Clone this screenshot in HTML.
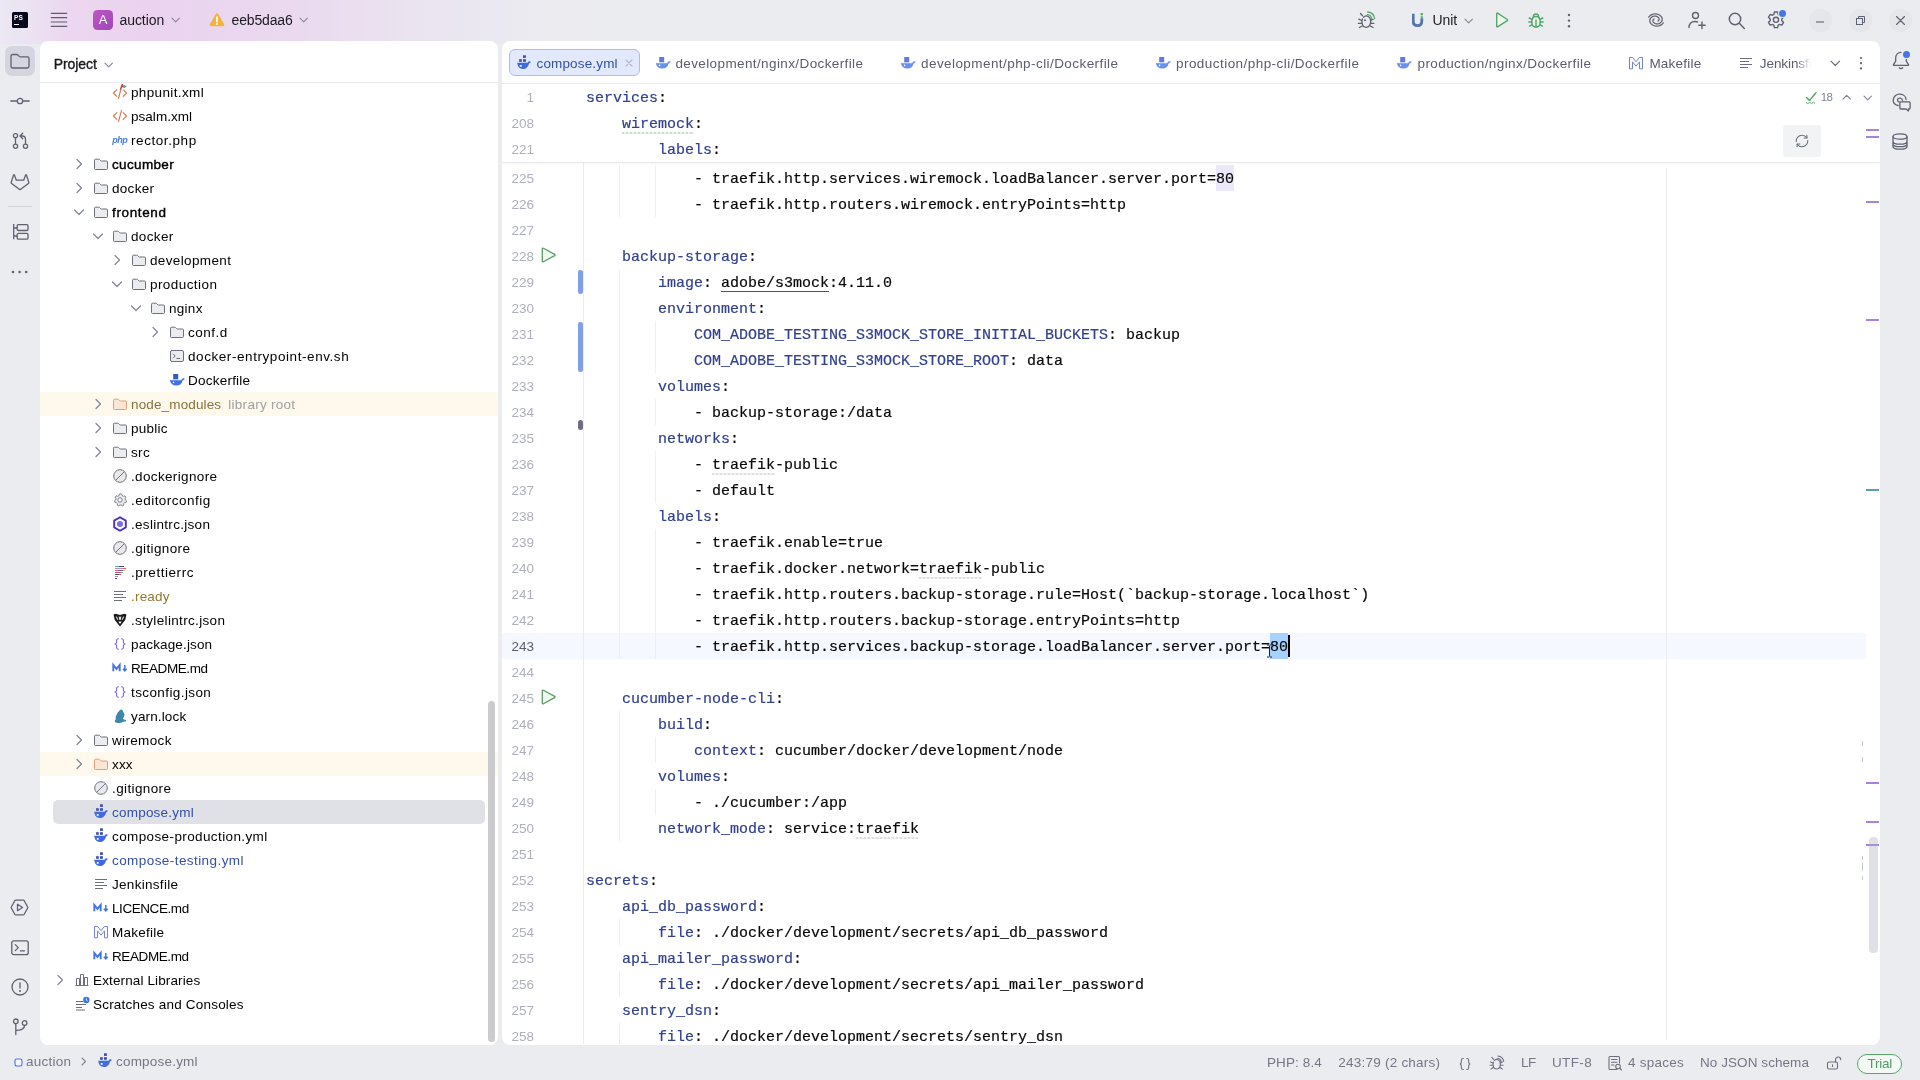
<!DOCTYPE html><html><head><meta charset="utf-8"><title>auction – compose.yml</title><style>
html,body{margin:0;padding:0}
body{width:1920px;height:1080px;overflow:hidden;background:#ebecf0;font-family:"Liberation Sans",sans-serif;font-size:13.5px;color:#000;position:relative}
.a{position:absolute}
.top{left:0;top:0;width:1920px;height:44px;background:linear-gradient(90deg,#ebe7f3 0px,#ebe3f2 30px,#ecd6f0 70px,#ebd3ef 150px,#eadaef 300px,#eae4f0 420px,#ebebf0 540px,#ebecf0 600px)}
.panel{background:#fff;border-radius:8px}
.t{position:absolute;white-space:nowrap}
.code{position:absolute;left:586px;white-space:pre;font-family:"Liberation Mono",monospace;font-size:15px;line-height:26px;height:26px;color:#080808;-webkit-text-stroke:0.2px}
.k{color:#31408f}
.ln{position:absolute;left:494px;width:40px;text-align:right;font-family:"Liberation Sans",sans-serif;font-size:13.500px;line-height:26px;height:26px;color:#aeb1bc}
.g{position:absolute;width:1px;background:#f0f0f3}
</style></head><body><div id="root" style="position:absolute;left:0;top:0;width:1920px;height:1080px;will-change:transform">
<div class="a top"></div>
<div class="a" style="left:12px;top:12px;width:16px;height:16px;background:#07071c;border-radius:1.5px"></div>
<div class="a" style="left:14px;top:13.5px;font:bold 6.5px/7px 'Liberation Sans',sans-serif;color:#fff;letter-spacing:0.1px">PS</div>
<div class="a" style="left:14px;top:23.5px;width:5px;height:1.3px;background:#fff"></div>
<div class="a" style="left:50px;top:12px"><svg width="18" height="16" viewBox="0 0 18 16" style="display:block;"><path d="M0.8 1.3h16.400M0.8 5.700h16.400M0.8 10h16.400M0.8 14.300h16.400" stroke="#625d6e" stroke-width="1.200" fill="none"/></svg></div>
<div class="a" style="left:93px;top:10px;width:20px;height:20px;border-radius:4.5px;background:linear-gradient(135deg,#c254c4,#9c48b6)"></div>
<div class="a" style="left:93px;top:10px;width:20px;height:20px;text-align:center;font:13px/20.5px 'Liberation Sans',sans-serif;color:#fff">A</div>
<div class="t" style="left:119.5px;top:12.3px;line-height:16px;font-size:14px;color:#1a1a1f;letter-spacing:-0.07px;">auction</div>
<div class="a" style="left:171px;top:17.3px"><svg width="10" height="6" viewBox="0 0 10 6" style="display:block;"><path d="M1 1.200l3.700 3.700 3.700-3.700" fill="none" stroke="#8c8496" stroke-width="1.100" stroke-linecap="round" stroke-linejoin="round"/></svg></div>
<div class="a" style="left:208.5px;top:12px"><svg width="16" height="15" viewBox="0 0 16 15" style="display:block;"><path d="M8 1.300c.5 0 .9.3 1.200.7l5.900 10.300c.5.900-.2 2-1.200 2H2.100c-1 0-1.700-1.100-1.200-2L6.800 2c.3-.4.700-.7 1.200-.7z" fill="#f2b33d"/><path d="M8 5v4.700" stroke="#fff" stroke-width="1.700" stroke-linecap="round"/><circle cx="8" cy="12" r="1" fill="#fff"/></svg></div>
<div class="t" style="left:231.5px;top:12.3px;line-height:16px;font-size:14px;color:#1a1a1f;letter-spacing:-0.16px;">eeb5daa6</div>
<div class="a" style="left:298.5px;top:17.3px"><svg width="10" height="6" viewBox="0 0 10 6" style="display:block;"><path d="M1 1.200l3.700 3.700 3.700-3.700" fill="none" stroke="#8c8496" stroke-width="1.100" stroke-linecap="round" stroke-linejoin="round"/></svg></div>
<div class="a" style="left:1356.5px;top:10.5px"><svg width="20" height="18" viewBox="0 0 20 18" style="display:block;"><g fill="none" stroke="#5f6270" stroke-width="1.300" stroke-linecap="round"><path d="M6.500 6.200c1.200-1.300 3.300-1.600 4.800-.7 1.900 1.100 2.700 3.700 2.300 6.200-.4 2.600-2 4.600-4.300 4.600s-4-2-4.300-4.600c-.2-1.300 0-2.600.5-3.700"/><path d="M4.800 9.500l-3-1.300M4.600 12.300H1.300M5.200 15l-2.800 1.500M13.700 12.300h3.200M13.300 15l2.800 1.500M13.500 9.500l2.500-1.200"/><path d="M5.500 4.800l-2-2.300"/></g><circle cx="8" cy="9.300" r="1" fill="#5f6270"/><g fill="none" stroke="#55a76a" stroke-width="1.300" stroke-linecap="round"><path d="M10.300 3.700c2.200.2 4 1.800 4.500 4"/><path d="M10.700 1c3.600.4 6.400 3 7 6.500"/></g></svg></div>
<div class="a" style="left:1412px;top:13px"><svg width="12" height="14" viewBox="0 0 12 14" style="display:block;"><path d="M1.200 0.800v7.400c0 2.600 1.700 4.400 4.300 4.400s4.300-1.800 4.300-4.400V5.200" fill="none" stroke="#5576a8" stroke-width="2.800"/><rect x="8.600" y="0" width="2.400" height="2.300" fill="#5fad65"/><rect x="8.600" y="3.300" width="2.400" height="1.600" fill="#5fad65"/></svg></div>
<div class="t" style="left:1432.5px;top:12.3px;line-height:16px;font-size:14px;color:#1a1a1f;letter-spacing:-0.10px;">Unit</div>
<div class="a" style="left:1463.5px;top:17.5px"><svg width="10" height="6" viewBox="0 0 10 6" style="display:block;"><path d="M1 1.200l3.700 3.700 3.700-3.700" fill="none" stroke="#818594" stroke-width="1.100" stroke-linecap="round" stroke-linejoin="round"/></svg></div>
<div class="a" style="left:1494.5px;top:12px"><svg width="14" height="16" viewBox="0 0 14 16" style="display:block;"><path d="M1.700 1.700v12.600c0 .5.500.8.900.5l9.700-6.200c.4-.3.400-.800 0-1.100L2.600 1.200c-.4-.3-.9 0-.9.500z" fill="#eaf6ec" stroke="#55a76a" stroke-width="1.400" stroke-linejoin="round"/></svg></div>
<div class="a" style="left:1527.5px;top:12px"><svg width="16" height="16" viewBox="0 0 16 16" style="display:block;"><g fill="none" stroke="#55a76a" stroke-width="1.400" stroke-linecap="round"><path d="M8 4.500c2.600 0 4.200 2.200 4.200 5.200S10.600 15 8 15s-4.200-2.300-4.200-5.300S5.400 4.500 8 4.500z" fill="#eaf6ec"/><path d="M5.300 4.800C5.300 3.100 6.400 2 8 2s2.700 1.100 2.700 2.800"/><path d="M3.800 7.300L1.200 6M3.800 10H.8M4.200 12.700l-2.600 1.500M12.200 7.300L14.800 6M12.200 10h3M11.800 12.700l2.600 1.500"/><path d="M8 8v6.800"/></g></svg></div>
<div class="a" style="left:1567px;top:12.7px"><svg width="4" height="16" viewBox="0 0 4 16" style="display:block;"><circle cx="2" cy="2" r="1.200" fill="#5f6270"/><circle cx="2" cy="7.600" r="1.200" fill="#5f6270"/><circle cx="2" cy="13.200" r="1.200" fill="#5f6270"/></svg></div>
<div class="a" style="left:1648px;top:11.8px"><svg width="16" height="16" viewBox="0 0 16 16" style="display:block;"><path d="M0.7 5.2 L1.7 4.1 L2.9 3.1 L4.3 2.4 L5.9 2.0 L7.5 1.9 L9.1 2.1 L10.5 2.5 L11.8 3.2 L12.8 4.1 L13.6 5.1 L14.1 6.2 L14.2 7.3 L14.1 8.4 L13.6 9.4 L13.0 10.2 L12.1 10.9 L11.2 11.5 L10.1 11.8 L9.0 11.9 L8.0 11.8 L7.1 11.5 L6.3 11.1 L5.6 10.6 L5.2 10.0 L4.9 9.4 L4.9 8.8 L5.0 8.2 L5.2 7.7 L5.6 7.3 L6.1 7.0 M15.3 10.8 L14.3 11.9 L13.1 12.9 L11.7 13.6 L10.1 14.0 L8.5 14.1 L6.9 13.9 L5.5 13.5 L4.2 12.8 L3.2 11.9 L2.4 10.9 L1.9 9.8 L1.8 8.7 L1.9 7.6 L2.4 6.6 L3.0 5.8 L3.9 5.1 L4.8 4.5 L5.9 4.2 L7.0 4.1 L8.0 4.2 L8.9 4.5 L9.7 4.9 L10.4 5.4 L10.8 6.0 L11.1 6.6 L11.1 7.2 L11.0 7.8 L10.8 8.3 L10.4 8.7 L9.9 9.0" fill="none" stroke="#5f6270" stroke-width="1.250" stroke-linecap="round" stroke-linejoin="round"/></svg></div>
<div class="a" style="left:1688px;top:10.5px"><svg width="19" height="19" viewBox="0 0 19 19" style="display:block;"><g fill="none" stroke="#5f6270" stroke-width="1.400" stroke-linecap="round"><circle cx="7.500" cy="4.500" r="3"/><path d="M1 16.500c0-3.700 2.500-6 6-6 1 0 1.800.2 2.500.5M14 11v6.500M10.800 14.200h6.400"/></g></svg></div>
<div class="a" style="left:1727.5px;top:11.5px"><svg width="18" height="18" viewBox="0 0 18 18" style="display:block;"><g fill="none" stroke="#5f6270" stroke-width="1.500" stroke-linecap="round"><circle cx="7" cy="7" r="5.700"/><path d="M11.300 11.300l5 5.200"/></g></svg></div>
<div class="a" style="left:1767px;top:10.8px"><svg width="18" height="18" viewBox="0 0 18 18" style="display:block;"><path d="M7.400 1h3.200l.5 2.300 1.600.9 2.200-.7 1.600 2.800-1.700 1.600v1.800l1.700 1.600-1.600 2.800-2.200-.7-1.600.9-.5 2.300H7.400l-.5-2.300-1.600-.9-2.200.7-1.600-2.800 1.700-1.600V7.900L1.500 6.300l1.600-2.800 2.200.7 1.600-.9z" fill="none" stroke="#5f6270" stroke-width="1.400" stroke-linejoin="round"/><circle cx="9" cy="8.800" r="2.600" fill="none" stroke="#5f6270" stroke-width="1.400"/></svg></div>
<div class="a" style="left:1778.800px;top:9.800px;width:7px;height:7px;border-radius:50%;background:#4674e6;box-shadow:0 0 0 1px #ebecf0"></div>
<div class="a" style="left:1808.5px;top:8.500px;width:23px;height:23px;border-radius:50%;background:#e5e6ea"></div>
<div class="a" style="left:1848.5px;top:8.500px;width:23px;height:23px;border-radius:50%;background:#e5e6ea"></div>
<div class="a" style="left:1888.5px;top:8.500px;width:23px;height:23px;border-radius:50%;background:#e5e6ea"></div>
<div class="a" style="left:1816px;top:20.5px"><svg width="8" height="2" viewBox="0 0 8 2" style="display:block;"><path d="M0 1h8" stroke="#5f6270" stroke-width="1.100"/></svg></div>
<div class="a" style="left:1855.5px;top:15.5px"><svg width="9" height="9" viewBox="0 0 9 9" style="display:block;"><path d="M2.500 2.500V.5h6v6H6.500" fill="none" stroke="#5f6270" stroke-width="1"/><rect x=".5" y="2.500" width="6" height="6" fill="none" stroke="#5f6270" stroke-width="1"/></svg></div>
<div class="a" style="left:1895.5px;top:15.5px"><svg width="9" height="9" viewBox="0 0 9 9" style="display:block;"><path d="M.5.500l8 8M8.500.5l-8 8" stroke="#5f6270" stroke-width="1.100" stroke-linecap="round"/></svg></div>
<div class="a" style="left:5px;top:46px;width:30px;height:30px;border-radius:7px;background:#d4d5de"></div>
<div class="a" style="left:10px;top:52.3px"><svg width="20" height="18" viewBox="0 0 20 18" style="display:block;"><path d="M1 4.200c0-1 .7-1.700 1.700-1.700h4c.5 0 .9.200 1.200.5l1.300 1.400c.3.300.7.500 1.200.500h6.900c1 0 1.700.7 1.700 1.700v7.700c0 1-.7 1.700-1.700 1.700H2.700c-1 0-1.700-.7-1.700-1.700z" fill="none" stroke="#5f6270" stroke-width="1.300"/></svg></div>
<div class="a" style="left:10px;top:97px"><svg width="20" height="8" viewBox="0 0 20 8" style="display:block;"><g fill="none" stroke="#5f6270" stroke-width="1.300" stroke-linecap="round"><circle cx="10" cy="4" r="2.700"/><path d="M.8 4h6.300M12.900 4h6.300"/></g></svg></div>
<div class="a" style="left:11.5px;top:132px"><svg width="17" height="18" viewBox="0 0 17 18" style="display:block;"><g fill="none" stroke="#5f6270" stroke-width="1.300" stroke-linecap="round" stroke-linejoin="round"><circle cx="3.500" cy="3.800" r="2.100"/><circle cx="3.500" cy="14.200" r="2.100"/><circle cx="13.500" cy="14.200" r="2.100"/><path d="M3.500 6v6.100M13.500 12V7.500c0-2-1.200-3.500-3.300-3.500H8.500M10.700 1.300L8 4l2.700 2.700"/></g></svg></div>
<div class="a" style="left:10px;top:172.5px"><svg width="20" height="18" viewBox="0 0 20 18" style="display:block;"><path d="M10 16.700L1.600 10.500c-.4-.3-.5-.8-.4-1.200L3.600 2c.1-.4.700-.4.800 0l1.900 5.200h7.400L15.600 2c.1-.4.700-.4.800 0l2.400 7.300c.1.400 0 .9-.4 1.200z" fill="none" stroke="#5f6270" stroke-width="1.300" stroke-linejoin="round"/></svg></div>
<div class="a" style="left:8px;top:206px;width:24px;height:1px;background:#d3d5db"></div>
<div class="a" style="left:11.5px;top:223px"><svg width="18" height="18" viewBox="0 0 18 18" style="display:block;"><g fill="none" stroke="#5f6270" stroke-width="1.300" stroke-linejoin="round"><path d="M1.700 1v15.300M1.700 5h3.500M1.700 13h3.500"/><rect x="5.200" y="1.700" width="10.800" height="5.800" rx="1.200"/><rect x="5.200" y="10.300" width="10.800" height="5.800" rx="1.200"/></g></svg></div>
<div class="a" style="left:11.3px;top:270px"><svg width="18" height="4" viewBox="0 0 18 4" style="display:block;"><circle cx="2" cy="2" r="1.300" fill="#5f6270"/><circle cx="8.600" cy="2" r="1.300" fill="#5f6270"/><circle cx="15.200" cy="2" r="1.300" fill="#5f6270"/></svg></div>
<div class="a" style="left:10.3px;top:898.5px"><svg width="19" height="17" viewBox="0 0 19 17" style="display:block;"><g fill="none" stroke="#5f6270" stroke-width="1.300" stroke-linejoin="round"><path d="M5.700 1.200h7.600c.4 0 .7.200.9.500l3.500 6.300c.2.300.2.700 0 1l-3.500 6.300c-.2.300-.5.500-.9.500H5.700c-.4 0-.7-.200-.9-.5L1.300 9c-.2-.3-.2-.7 0-1l3.500-6.300c.2-.3.500-.5.900-.5z"/><path d="M7.500 5.300v6.400l5-3.200z"/></g></svg></div>
<div class="a" style="left:11px;top:939.5px"><svg width="18" height="16" viewBox="0 0 18 16" style="display:block;"><g fill="none" stroke="#5f6270" stroke-width="1.300" stroke-linecap="round" stroke-linejoin="round"><rect x=".8" y=".8" width="16.400" height="13.900" rx="2"/><path d="M4.300 4.600l3 3-3 3M9.300 10.800h4.200"/></g></svg></div>
<div class="a" style="left:11px;top:978px"><svg width="18" height="18" viewBox="0 0 18 18" style="display:block;"><g fill="none" stroke="#5f6270" stroke-width="1.300" stroke-linecap="round"><circle cx="9" cy="9" r="8"/><path d="M9 4.800v5.200"/></g><circle cx="9" cy="12.900" r="1" fill="#5f6270"/></svg></div>
<div class="a" style="left:12px;top:1017.5px"><svg width="16" height="18" viewBox="0 0 16 18" style="display:block;"><g fill="none" stroke="#5f6270" stroke-width="1.300" stroke-linecap="round"><circle cx="3.800" cy="3.300" r="2.300"/><circle cx="12.600" cy="5" r="2.300"/><path d="M3.800 5.600v11M3.800 12.300c4.500 0 8.800-1 8.800-5"/></g></svg></div>
<div class="a" style="left:1892px;top:51px"><svg width="18" height="19" viewBox="0 0 18 19" style="display:block;"><g fill="none" stroke="#5f6270" stroke-width="1.300" stroke-linecap="round" stroke-linejoin="round"><path d="M9 1.300c-3.200 0-5.300 2.400-5.300 5.500v3.400L1.500 13.600c-.2.400 0 .8.500.8h14c.5 0 .7-.4.500-.8l-2.200-3.400V6.800"/><path d="M7.300 16.800c.4.500 1 .7 1.700.7s1.300-.2 1.700-.7"/></g></svg></div>
<div class="a" style="left:1903px;top:51.300px;width:7px;height:7px;border-radius:50%;background:#4674e6;box-shadow:0 0 0 1px #ebecf0"></div>
<div class="a" style="left:1891.5px;top:92.5px"><svg width="19" height="19" viewBox="0 0 19 19" style="display:block;"><g fill="none" stroke="#5f6270" stroke-width="1.300" stroke-linecap="round" stroke-linejoin="round"><path d="M6.200 12.500C3.200 12 1 9.800 1.200 6.800 1.400 3.500 4.300 1 8 1.200c3.600.2 6 2.600 6 5.300"/><path d="M7.500 8.800c-1.100.1-2-.6-2-1.700 0-1.300 1.200-2.200 2.700-2 1.300.2 2.200 1.100 2.300 2.300"/><path d="M8.800 8.800h8.400c.5 0 .9.400.9.900v5.400c0 .5-.4.900-.9.900h-.7v2l-2.500-2H8.800c-.5 0-.9-.4-.9-.9V9.700c0-.5.400-.9.900-.9z" fill="#ebecf0"/></g></svg></div>
<div class="a" style="left:1892px;top:132.5px"><svg width="16" height="17.5" viewBox="0 0 16 17.5" style="display:block;"><g fill="none" stroke="#5f6270" stroke-width="1.300"><ellipse cx="8" cy="3.500" rx="7" ry="2.700"/><path d="M1 3.500v10c0 1.500 3.100 2.700 7 2.700s7-1.200 7-2.700v-10M1 8.500c0 1.500 3.100 2.700 7 2.700s7-1.200 7-2.700M1 11c0 1.500 3.100 2.700 7 2.700s7-1.200 7-2.700" /></g></svg></div>
<div class="a panel" style="left:40px;top:41px;width:458px;height:1004px"></div>
<div class="t" style="left:53.7px;top:55.8px;line-height:16px;font-size:14px;color:#1a1a1f;letter-spacing:-0.08px;-webkit-text-stroke:0.35px #1a1a1f;">Project</div>
<div class="a" style="left:103.5px;top:61.5px"><svg width="10" height="6" viewBox="0 0 10 6" style="display:block;"><path d="M1 1.200l3.700 3.700 3.700-3.700" fill="none" stroke="#818594" stroke-width="1.100" stroke-linecap="round" stroke-linejoin="round"/></svg></div>
<div class="a" style="left:40px;top:82px;width:458px;height:1px;background:#ebecf0"></div>
<div class="a" style="left:112px;top:84px"><svg width="16" height="16" viewBox="0 0 16 16" style="display:block;"><path d="M4.800 5.600L1.400 9l3.400 3.400M11.500 6L14.600 9l-3.400 3.400M8.800 5.500L6.500 14.500" fill="none" stroke="#d97a52" stroke-width="1.100" stroke-linecap="round" stroke-linejoin="round"/><path d="M8.600 5.600L10.200 0.600l1.300 2.800" fill="none" stroke="#c4405a" stroke-width="1.500" stroke-linejoin="round"/><path d="M11.800 0.800l3 1.700-3 1.800z" fill="#4fa573"/></svg></div>
<div class="t" style="left:131.0px;top:85.0px;line-height:16px;letter-spacing:0.36px;">phpunit.xml</div>
<div class="a" style="left:112px;top:108px"><svg width="16" height="16" viewBox="0 0 16 16" style="display:block;"><path d="M4.800 4.600L1.400 8l3.400 3.400M11.200 4.600L14.600 8l-3.400 3.400M9.500 2.500L6.500 13.500" fill="none" stroke="#d97a52" stroke-width="1.100" stroke-linecap="round" stroke-linejoin="round"/></svg></div>
<div class="t" style="left:131.0px;top:109.0px;line-height:16px;letter-spacing:0.03px;">psalm.xml</div>
<div class="a" style="left:112px;top:132px"><div style="font:italic bold 9px/16px 'Liberation Sans',sans-serif;color:#4a7be0;letter-spacing:-0.5px;width:17px;height:16px;margin-left:0.300px">php</div></div>
<div class="t" style="left:131.0px;top:133.0px;line-height:16px;letter-spacing:0.57px;">rector.php</div>
<div class="a" style="left:71px;top:156px"><svg width="16" height="16" viewBox="0 0 16 16" style="display:block;"><path d="M6 3.5l4.5 4.5L6 12.5" fill="none" stroke="#818594" stroke-width="1.2" stroke-linecap="round" stroke-linejoin="round"/></svg></div>
<div class="a" style="left:93px;top:156px"><svg width="16" height="16" viewBox="0 0 16 16" style="display:block;"><path d="M1.5 4.2c0-.6.4-1 1-1h3.3c.3 0 .5.1.7.3l1.2 1.2c.2.2.4.3.7.3h5.1c.6 0 1 .4 1 1v6.5c0 .6-.4 1-1 1h-11c-.6 0-1-.4-1-1z" fill="#ebecf0" stroke="#6c707e" stroke-width="1"/></svg></div>
<div class="t" style="left:112.0px;top:157.0px;line-height:16px;letter-spacing:0.34px;-webkit-text-stroke:0.4px #000;">cucumber</div>
<div class="a" style="left:71px;top:180px"><svg width="16" height="16" viewBox="0 0 16 16" style="display:block;"><path d="M6 3.5l4.5 4.5L6 12.5" fill="none" stroke="#818594" stroke-width="1.2" stroke-linecap="round" stroke-linejoin="round"/></svg></div>
<div class="a" style="left:93px;top:180px"><svg width="16" height="16" viewBox="0 0 16 16" style="display:block;"><path d="M1.5 4.2c0-.6.4-1 1-1h3.3c.3 0 .5.1.7.3l1.2 1.2c.2.2.4.3.7.3h5.1c.6 0 1 .4 1 1v6.5c0 .6-.4 1-1 1h-11c-.6 0-1-.4-1-1z" fill="#ebecf0" stroke="#6c707e" stroke-width="1"/></svg></div>
<div class="t" style="left:112.0px;top:181.0px;line-height:16px;letter-spacing:0.29px;">docker</div>
<div class="a" style="left:71px;top:204px"><svg width="16" height="16" viewBox="0 0 16 16" style="display:block;"><path d="M3.5 6l4.5 4.5L12.5 6" fill="none" stroke="#818594" stroke-width="1.2" stroke-linecap="round" stroke-linejoin="round"/></svg></div>
<div class="a" style="left:93px;top:204px"><svg width="16" height="16" viewBox="0 0 16 16" style="display:block;"><path d="M1.5 4.2c0-.6.4-1 1-1h3.3c.3 0 .5.1.7.3l1.2 1.2c.2.2.4.3.7.3h5.1c.6 0 1 .4 1 1v6.5c0 .6-.4 1-1 1h-11c-.6 0-1-.4-1-1z" fill="#ebecf0" stroke="#6c707e" stroke-width="1"/></svg></div>
<div class="t" style="left:112.0px;top:205.0px;line-height:16px;letter-spacing:0.64px;-webkit-text-stroke:0.4px #000;">frontend</div>
<div class="a" style="left:90px;top:228px"><svg width="16" height="16" viewBox="0 0 16 16" style="display:block;"><path d="M3.5 6l4.5 4.5L12.5 6" fill="none" stroke="#818594" stroke-width="1.2" stroke-linecap="round" stroke-linejoin="round"/></svg></div>
<div class="a" style="left:112px;top:228px"><svg width="16" height="16" viewBox="0 0 16 16" style="display:block;"><path d="M1.5 4.2c0-.6.4-1 1-1h3.3c.3 0 .5.1.7.3l1.2 1.2c.2.2.4.3.7.3h5.1c.6 0 1 .4 1 1v6.5c0 .6-.4 1-1 1h-11c-.6 0-1-.4-1-1z" fill="#ebecf0" stroke="#6c707e" stroke-width="1"/></svg></div>
<div class="t" style="left:131.0px;top:229.0px;line-height:16px;letter-spacing:0.36px;">docker</div>
<div class="a" style="left:109px;top:252px"><svg width="16" height="16" viewBox="0 0 16 16" style="display:block;"><path d="M6 3.5l4.5 4.5L6 12.5" fill="none" stroke="#818594" stroke-width="1.2" stroke-linecap="round" stroke-linejoin="round"/></svg></div>
<div class="a" style="left:131px;top:252px"><svg width="16" height="16" viewBox="0 0 16 16" style="display:block;"><path d="M1.5 4.2c0-.6.4-1 1-1h3.3c.3 0 .5.1.7.3l1.2 1.2c.2.2.4.3.7.3h5.1c.6 0 1 .4 1 1v6.5c0 .6-.4 1-1 1h-11c-.6 0-1-.4-1-1z" fill="#ebecf0" stroke="#6c707e" stroke-width="1"/></svg></div>
<div class="t" style="left:150.0px;top:253.0px;line-height:16px;letter-spacing:0.36px;">development</div>
<div class="a" style="left:109px;top:276px"><svg width="16" height="16" viewBox="0 0 16 16" style="display:block;"><path d="M3.5 6l4.5 4.5L12.5 6" fill="none" stroke="#818594" stroke-width="1.2" stroke-linecap="round" stroke-linejoin="round"/></svg></div>
<div class="a" style="left:131px;top:276px"><svg width="16" height="16" viewBox="0 0 16 16" style="display:block;"><path d="M1.5 4.2c0-.6.4-1 1-1h3.3c.3 0 .5.1.7.3l1.2 1.2c.2.2.4.3.7.3h5.1c.6 0 1 .4 1 1v6.5c0 .6-.4 1-1 1h-11c-.6 0-1-.4-1-1z" fill="#ebecf0" stroke="#6c707e" stroke-width="1"/></svg></div>
<div class="t" style="left:150.0px;top:277.0px;line-height:16px;letter-spacing:0.43px;">production</div>
<div class="a" style="left:128px;top:300px"><svg width="16" height="16" viewBox="0 0 16 16" style="display:block;"><path d="M3.5 6l4.5 4.5L12.5 6" fill="none" stroke="#818594" stroke-width="1.2" stroke-linecap="round" stroke-linejoin="round"/></svg></div>
<div class="a" style="left:150px;top:300px"><svg width="16" height="16" viewBox="0 0 16 16" style="display:block;"><path d="M1.5 4.2c0-.6.4-1 1-1h3.3c.3 0 .5.1.7.3l1.2 1.2c.2.2.4.3.7.3h5.1c.6 0 1 .4 1 1v6.5c0 .6-.4 1-1 1h-11c-.6 0-1-.4-1-1z" fill="#ebecf0" stroke="#6c707e" stroke-width="1"/></svg></div>
<div class="t" style="left:169.0px;top:301.0px;line-height:16px;letter-spacing:0.28px;">nginx</div>
<div class="a" style="left:147px;top:324px"><svg width="16" height="16" viewBox="0 0 16 16" style="display:block;"><path d="M6 3.5l4.5 4.5L6 12.5" fill="none" stroke="#818594" stroke-width="1.2" stroke-linecap="round" stroke-linejoin="round"/></svg></div>
<div class="a" style="left:169px;top:324px"><svg width="16" height="16" viewBox="0 0 16 16" style="display:block;"><path d="M1.5 4.2c0-.6.4-1 1-1h3.3c.3 0 .5.1.7.3l1.2 1.2c.2.2.4.3.7.3h5.1c.6 0 1 .4 1 1v6.5c0 .6-.4 1-1 1h-11c-.6 0-1-.4-1-1z" fill="#ebecf0" stroke="#6c707e" stroke-width="1"/></svg></div>
<div class="t" style="left:188.0px;top:325.0px;line-height:16px;letter-spacing:0.49px;">conf.d</div>
<div class="a" style="left:169px;top:348px"><svg width="16" height="16" viewBox="0 0 16 16" style="display:block;"><rect x="1.500" y="2.500" width="13" height="11" rx="1.500" fill="#ebecf0" stroke="#6c707e" stroke-width="1"/><path d="M4 5.800l2.200 2.200L4 10.200M7.500 10.500h3.500" stroke="#6c707e" stroke-width="1" fill="none"/></svg></div>
<div class="t" style="left:188.0px;top:349.0px;line-height:16px;letter-spacing:0.57px;">docker-entrypoint-env.sh</div>
<div class="a" style="left:169px;top:372px"><svg width="16" height="16" viewBox="0 0 16 16" style="display:block;"><path d="M.8 8h11.600c.2-1 .9-1.800 2.100-1.800.4 0 .8.100 1.100.300-.2 1.100-1 1.800-2.100 1.900-.5 3.200-2.800 5.100-6.200 5.100-3.800 0-6-2-6.500-5.500z" fill="#4071e8"/><path d="M1.500 8.400h10.500" stroke="#6f98f5" stroke-width="0.900"/><circle cx="4.600" cy="10.400" r="0.800" fill="#fff"/><rect x="4.200" y="2" width="5" height="5.300" fill="#3558c8"/></svg></div>
<div class="t" style="left:188.0px;top:373.0px;line-height:16px;letter-spacing:0.23px;">Dockerfile</div>
<div class="a" style="left:40px;top:392px;width:458px;height:24px;background:#fef9ec"></div>
<div class="a" style="left:90px;top:396px"><svg width="16" height="16" viewBox="0 0 16 16" style="display:block;"><path d="M6 3.5l4.5 4.5L6 12.5" fill="none" stroke="#818594" stroke-width="1.2" stroke-linecap="round" stroke-linejoin="round"/></svg></div>
<div class="a" style="left:112px;top:396px"><svg width="16" height="16" viewBox="0 0 16 16" style="display:block;"><path d="M1.5 4.2c0-.6.4-1 1-1h3.3c.3 0 .5.1.7.3l1.2 1.2c.2.2.4.3.7.3h5.1c.6 0 1 .4 1 1v6.5c0 .6-.4 1-1 1h-11c-.6 0-1-.4-1-1z" fill="#fbe6d6" stroke="#e59f78" stroke-width="1"/></svg></div>
<div class="t" style="left:131.0px;top:397.0px;line-height:16px;color:#8a713c;letter-spacing:0.14px;">node_modules</div>
<div class="t" style="left:228.3px;top:397.0px;line-height:16px;color:#a0a0a5;letter-spacing:0.27px;">library root</div>
<div class="a" style="left:90px;top:420px"><svg width="16" height="16" viewBox="0 0 16 16" style="display:block;"><path d="M6 3.5l4.5 4.5L6 12.5" fill="none" stroke="#818594" stroke-width="1.2" stroke-linecap="round" stroke-linejoin="round"/></svg></div>
<div class="a" style="left:112px;top:420px"><svg width="16" height="16" viewBox="0 0 16 16" style="display:block;"><path d="M1.5 4.2c0-.6.4-1 1-1h3.3c.3 0 .5.1.7.3l1.2 1.2c.2.2.4.3.7.3h5.1c.6 0 1 .4 1 1v6.5c0 .6-.4 1-1 1h-11c-.6 0-1-.4-1-1z" fill="#ebecf0" stroke="#6c707e" stroke-width="1"/></svg></div>
<div class="t" style="left:131.0px;top:421.0px;line-height:16px;letter-spacing:0.24px;">public</div>
<div class="a" style="left:90px;top:444px"><svg width="16" height="16" viewBox="0 0 16 16" style="display:block;"><path d="M6 3.5l4.5 4.5L6 12.5" fill="none" stroke="#818594" stroke-width="1.2" stroke-linecap="round" stroke-linejoin="round"/></svg></div>
<div class="a" style="left:112px;top:444px"><svg width="16" height="16" viewBox="0 0 16 16" style="display:block;"><path d="M1.5 4.2c0-.6.4-1 1-1h3.3c.3 0 .5.1.7.3l1.2 1.2c.2.2.4.3.7.3h5.1c.6 0 1 .4 1 1v6.5c0 .6-.4 1-1 1h-11c-.6 0-1-.4-1-1z" fill="#ebecf0" stroke="#6c707e" stroke-width="1"/></svg></div>
<div class="t" style="left:131.0px;top:445.0px;line-height:16px;letter-spacing:0.33px;">src</div>
<div class="a" style="left:112px;top:468px"><svg width="16" height="16" viewBox="0 0 16 16" style="display:block;"><circle cx="8" cy="8" r="6.300" fill="#e9e9ec" stroke="#72757f" stroke-width="1"/><path d="M3.700 12.300L12.300 3.700" stroke="#72757f" stroke-width="1"/></svg></div>
<div class="t" style="left:131.0px;top:469.0px;line-height:16px;letter-spacing:0.35px;">.dockerignore</div>
<div class="a" style="left:112px;top:492px"><svg width="16" height="16" viewBox="0 0 16 16" style="display:block;"><path d="M8 1.6l1.6.3.5 1.5 1.4.8 1.5-.4 1.1 1.3-.7 1.4.2 1.5 1.2.9-.5 1.6-1.5.2-1 1.2.1 1.6-1.5.7-1.2-1H8l-1.2 1-1.5-.7.1-1.6-1-1.2-1.5-.2-.5-1.6 1.2-.9.2-1.5-.7-1.4L4.2 3.8l1.5.4 1.4-.8.5-1.5z" fill="#ebecf0" stroke="#6c707e" stroke-width="0.9" stroke-linejoin="round" transform="translate(0.2 0.2) scale(0.97)"/><circle cx="8" cy="8" r="2.2" fill="#fff" stroke="#6c707e" stroke-width="0.9"/></svg></div>
<div class="t" style="left:131.0px;top:493.0px;line-height:16px;letter-spacing:0.47px;">.editorconfig</div>
<div class="a" style="left:112px;top:516px"><svg width="16" height="16" viewBox="0 0 16 16" style="display:block;"><path d="M8 1.300l5.800 3.350v6.700L8 14.700l-5.800-3.350v-6.700z" fill="#fff" stroke="#4b32c3" stroke-width="1.900" stroke-linejoin="round"/><circle cx="8" cy="8" r="3" fill="#7a6cf0"/></svg></div>
<div class="t" style="left:131.0px;top:517.0px;line-height:16px;letter-spacing:0.30px;">.eslintrc.json</div>
<div class="a" style="left:112px;top:540px"><svg width="16" height="16" viewBox="0 0 16 16" style="display:block;"><circle cx="8" cy="8" r="6.300" fill="#e9e9ec" stroke="#72757f" stroke-width="1"/><path d="M3.700 12.300L12.300 3.700" stroke="#72757f" stroke-width="1"/></svg></div>
<div class="t" style="left:131.0px;top:541.0px;line-height:16px;letter-spacing:0.38px;">.gitignore</div>
<div class="a" style="left:112px;top:564px"><svg width="16" height="16" viewBox="0 0 16 16" style="display:block;"><g stroke-width="1" shape-rendering="crispEdges"><path d="M3 2.500h4" stroke="#56b3b4"/><path d="M7 2.500h5" stroke="#4a4a6a"/><path d="M3 4.500h8" stroke="#bf85bf"/><path d="M11 4.500h3" stroke="#ea5e5e"/><path d="M3 6.500h3" stroke="#ea5e5e"/><path d="M6 6.500h5" stroke="#6a5aa8"/><path d="M11 6.500h2" stroke="#f7ba3e"/><path d="M3 8.500h6" stroke="#c0506a"/><path d="M9 8.500h2" stroke="#56b3b4"/><path d="M3 10.500h4" stroke="#4a4a6a"/><path d="M7 10.500h2" stroke="#ea5e5e"/><path d="M3 12.500h3" stroke="#bf85bf"/><path d="M3 14.500h2" stroke="#4a4a6a"/></g></svg></div>
<div class="t" style="left:131.0px;top:565.0px;line-height:16px;letter-spacing:0.54px;">.prettierrc</div>
<div class="a" style="left:112px;top:588px"><svg width="16" height="16" viewBox="0 0 16 16" style="display:block;"><path d="M2 3.5h12M2 6.5h9M2 9.5h12M2 12.5h8" stroke="#6c707e" stroke-width="1" fill="none"/></svg></div>
<div class="t" style="left:131.0px;top:589.0px;line-height:16px;color:#94772a;letter-spacing:0.19px;">.ready</div>
<div class="a" style="left:112px;top:612px"><svg width="16" height="16" viewBox="0 0 16 16" style="display:block;"><path d="M1.5 2.5l2.2-.8L8 3l4.3-1.3 2.2.8L13.2 8 8 14.5 2.800 8z" fill="#1a1a1a"/><path d="M4.3 4.6l1.5 3.2M7.1 4.6L8 7.8l.9-3.2M11.7 4.6l-1.5 3.2" stroke="#fff" stroke-width="1" fill="none"/><path d="M6.3 9.6L8 12l1.7-2.4z" fill="#fff"/></svg></div>
<div class="t" style="left:131.0px;top:613.0px;line-height:16px;letter-spacing:0.34px;">.stylelintrc.json</div>
<div class="a" style="left:112px;top:636px"><svg width="16" height="16" viewBox="0 0 16 16" style="display:block;"><path d="M6.400 2.800c-1.300 0-1.800.6-1.800 1.600v1.800c0 .8-.5 1.400-1.400 1.800.9.400 1.400 1 1.400 1.800v1.800c0 1 .5 1.600 1.800 1.600M9.600 2.800c1.300 0 1.800.6 1.800 1.600v1.800c0 .8.500 1.400 1.400 1.800-.9.400-1.400 1-1.400 1.800v1.800c0 1-.5 1.600-1.800 1.600" fill="none" stroke="#7f62e6" stroke-width="1.100" stroke-linecap="round"/></svg></div>
<div class="t" style="left:131.0px;top:637.0px;line-height:16px;letter-spacing:0.14px;">package.json</div>
<div class="a" style="left:112px;top:660px"><svg width="16" height="16" viewBox="0 0 16 16" style="display:block;margin-left:0.300px"><path d="M1.300 11.200V5l3.200 3.900L7.700 5v6.200" fill="none" stroke="#4274e2" stroke-width="1.900" stroke-linejoin="miter"/><path d="M12.800 4.900v5.800M10.900 8.700l1.900 2.200 1.900-2.200" fill="none" stroke="#4274e2" stroke-width="1.500"/></svg></div>
<div class="t" style="left:131.0px;top:661.0px;line-height:16px;letter-spacing:-0.40px;">README.md</div>
<div class="a" style="left:112px;top:684px"><svg width="16" height="16" viewBox="0 0 16 16" style="display:block;"><path d="M6.400 2.800c-1.300 0-1.800.6-1.800 1.600v1.800c0 .8-.5 1.400-1.400 1.800.9.400 1.400 1 1.400 1.800v1.800c0 1 .5 1.600 1.800 1.600M9.600 2.800c1.300 0 1.800.6 1.800 1.600v1.800c0 .8.500 1.400 1.400 1.800-.9.400-1.400 1-1.400 1.800v1.800c0 1-.5 1.600-1.800 1.600" fill="none" stroke="#7f62e6" stroke-width="1.100" stroke-linecap="round"/></svg></div>
<div class="t" style="left:131.0px;top:685.0px;line-height:16px;letter-spacing:0.40px;">tsconfig.json</div>
<div class="a" style="left:112px;top:708px"><svg width="16" height="16" viewBox="0 0 16 16" style="display:block;"><path d="M9.500 1.500c1 .3 1.600 1.300 1.700 2.700.9.5 1.300 1.600 1.200 2.900-.1 1.500-.8 2.600-1.600 3.300.5.900 1.700 1.200 3.200 1.500v1.300c-2.500.2-4 .9-5.800 1.800-2 .1-4.200-.2-5.200-1.100-.4-1.200.2-2.200.9-2.700-.6-1.700-.2-3.300 1-4.700.2-1.300 1-2.300 2-2.900.3-1 1.200-2.100 2.600-2.100z" fill="#3c87ab"/></svg></div>
<div class="t" style="left:131.0px;top:709.0px;line-height:16px;letter-spacing:0.14px;">yarn.lock</div>
<div class="a" style="left:71px;top:732px"><svg width="16" height="16" viewBox="0 0 16 16" style="display:block;"><path d="M6 3.5l4.5 4.5L6 12.5" fill="none" stroke="#818594" stroke-width="1.2" stroke-linecap="round" stroke-linejoin="round"/></svg></div>
<div class="a" style="left:93px;top:732px"><svg width="16" height="16" viewBox="0 0 16 16" style="display:block;"><path d="M1.5 4.2c0-.6.4-1 1-1h3.3c.3 0 .5.1.7.3l1.2 1.2c.2.2.4.3.7.3h5.1c.6 0 1 .4 1 1v6.5c0 .6-.4 1-1 1h-11c-.6 0-1-.4-1-1z" fill="#ebecf0" stroke="#6c707e" stroke-width="1"/></svg></div>
<div class="t" style="left:112.0px;top:733.0px;line-height:16px;letter-spacing:0.34px;">wiremock</div>
<div class="a" style="left:40px;top:752px;width:458px;height:24px;background:#fef9ec"></div>
<div class="a" style="left:71px;top:756px"><svg width="16" height="16" viewBox="0 0 16 16" style="display:block;"><path d="M6 3.5l4.5 4.5L6 12.5" fill="none" stroke="#818594" stroke-width="1.2" stroke-linecap="round" stroke-linejoin="round"/></svg></div>
<div class="a" style="left:93px;top:756px"><svg width="16" height="16" viewBox="0 0 16 16" style="display:block;"><path d="M1.5 4.2c0-.6.4-1 1-1h3.3c.3 0 .5.1.7.3l1.2 1.2c.2.2.4.3.7.3h5.1c.6 0 1 .4 1 1v6.5c0 .6-.4 1-1 1h-11c-.6 0-1-.4-1-1z" fill="#fbe6d6" stroke="#e59f78" stroke-width="1"/></svg></div>
<div class="t" style="left:112.0px;top:757.0px;line-height:16px;letter-spacing:0.15px;">xxx</div>
<div class="a" style="left:93px;top:780px"><svg width="16" height="16" viewBox="0 0 16 16" style="display:block;"><circle cx="8" cy="8" r="6.300" fill="#e9e9ec" stroke="#72757f" stroke-width="1"/><path d="M3.700 12.300L12.300 3.700" stroke="#72757f" stroke-width="1"/></svg></div>
<div class="t" style="left:112.0px;top:781.0px;line-height:16px;letter-spacing:0.38px;">.gitignore</div>
<div class="a" style="left:53px;top:800px;width:432px;height:24px;border-radius:5px;background:#dfe1e6"></div>
<div class="a" style="left:93px;top:804px"><svg width="16" height="16" viewBox="0 0 16 16" style="display:block;"><path d="M1.200 7.800h10.300c.4-.9 1.300-1.600 2.400-1.400.3 0 .6.100.8.300-.2 1-.9 1.500-1.700 1.700-.7 3.400-2.900 5.600-6.200 5.600-3.300 0-5.200-2.400-5.600-6.200z" fill="#3f6ce6"/><rect x="3.100" y="4.200" width="2.700" height="2.600" fill="#3f4db0"/><rect x="7" y="4.200" width="2.900" height="2.600" fill="#3f4db0"/><rect x="7" y="0.300" width="2.900" height="2.600" fill="#3f4db0"/><rect x="3.800" y="10" width="1.900" height="1.800" fill="#eef3ff"/></svg></div>
<div class="t" style="left:112.0px;top:805.0px;line-height:16px;color:#3450a8;letter-spacing:0.22px;">compose.yml</div>
<div class="a" style="left:93px;top:828px"><svg width="16" height="16" viewBox="0 0 16 16" style="display:block;"><path d="M1.200 7.800h10.300c.4-.9 1.300-1.600 2.400-1.400.3 0 .6.100.8.300-.2 1-.9 1.500-1.700 1.700-.7 3.400-2.900 5.600-6.200 5.600-3.300 0-5.200-2.400-5.600-6.200z" fill="#3f6ce6"/><rect x="3.100" y="4.200" width="2.700" height="2.600" fill="#3f4db0"/><rect x="7" y="4.200" width="2.900" height="2.600" fill="#3f4db0"/><rect x="7" y="0.300" width="2.900" height="2.600" fill="#3f4db0"/><rect x="3.800" y="10" width="1.900" height="1.800" fill="#eef3ff"/></svg></div>
<div class="t" style="left:112.0px;top:829.0px;line-height:16px;letter-spacing:0.39px;">compose-production.yml</div>
<div class="a" style="left:93px;top:852px"><svg width="16" height="16" viewBox="0 0 16 16" style="display:block;"><path d="M1.200 7.800h10.300c.4-.9 1.300-1.600 2.400-1.400.3 0 .6.100.8.300-.2 1-.9 1.500-1.700 1.700-.7 3.400-2.900 5.600-6.200 5.600-3.300 0-5.200-2.400-5.600-6.200z" fill="#3f6ce6"/><rect x="3.100" y="4.200" width="2.700" height="2.600" fill="#3f4db0"/><rect x="7" y="4.200" width="2.900" height="2.600" fill="#3f4db0"/><rect x="7" y="0.300" width="2.900" height="2.600" fill="#3f4db0"/><rect x="3.800" y="10" width="1.900" height="1.800" fill="#eef3ff"/></svg></div>
<div class="t" style="left:112.0px;top:853.0px;line-height:16px;color:#3450a8;letter-spacing:0.43px;">compose-testing.yml</div>
<div class="a" style="left:93px;top:876px"><svg width="16" height="16" viewBox="0 0 16 16" style="display:block;"><path d="M2 3.5h12M2 6.5h9M2 9.5h12M2 12.5h8" stroke="#6c707e" stroke-width="1" fill="none"/></svg></div>
<div class="t" style="left:112.0px;top:877.0px;line-height:16px;letter-spacing:0.30px;">Jenkinsfile</div>
<div class="a" style="left:93px;top:900px"><svg width="16" height="16" viewBox="0 0 16 16" style="display:block;margin-left:0.300px"><path d="M1.300 11.200V5l3.200 3.900L7.700 5v6.200" fill="none" stroke="#4274e2" stroke-width="1.900" stroke-linejoin="miter"/><path d="M12.800 4.900v5.800M10.900 8.700l1.900 2.200 1.900-2.200" fill="none" stroke="#4274e2" stroke-width="1.500"/></svg></div>
<div class="t" style="left:112.0px;top:901.0px;line-height:16px;letter-spacing:-0.43px;">LICENCE.md</div>
<div class="a" style="left:93px;top:924px"><svg width="16" height="16" viewBox="0 0 16 16" style="display:block;"><path d="M1.500 2.500H4.700L8 6.700l3.300-4.200h3.200v11.300h-3V6.900L8 11.100 4.500 6.900v6.900h-3z" fill="#fbfbff" stroke="#7783cc" stroke-width="1" stroke-linejoin="round"/></svg></div>
<div class="t" style="left:112.0px;top:925.0px;line-height:16px;letter-spacing:0.25px;">Makefile</div>
<div class="a" style="left:93px;top:948px"><svg width="16" height="16" viewBox="0 0 16 16" style="display:block;margin-left:0.300px"><path d="M1.300 11.200V5l3.200 3.900L7.700 5v6.200" fill="none" stroke="#4274e2" stroke-width="1.900" stroke-linejoin="miter"/><path d="M12.800 4.900v5.800M10.900 8.700l1.900 2.200 1.900-2.200" fill="none" stroke="#4274e2" stroke-width="1.500"/></svg></div>
<div class="t" style="left:112.0px;top:949.0px;line-height:16px;letter-spacing:-0.40px;">README.md</div>
<div class="a" style="left:52px;top:972px"><svg width="16" height="16" viewBox="0 0 16 16" style="display:block;"><path d="M6 3.5l4.5 4.5L6 12.5" fill="none" stroke="#818594" stroke-width="1.2" stroke-linecap="round" stroke-linejoin="round"/></svg></div>
<div class="a" style="left:74px;top:972px"><svg width="16" height="16" viewBox="0 0 16 16" style="display:block;"><path d="M1.500 13.500h13M2.500 13.500v-7h3v7M6.500 13.500v-11h3v11M10.500 13.500v-8h3v8" fill="none" stroke="#6c707e" stroke-width="1"/></svg></div>
<div class="t" style="left:93.0px;top:973.0px;line-height:16px;letter-spacing:0.13px;">External Libraries</div>
<div class="a" style="left:74px;top:996px"><svg width="16" height="16" viewBox="0 0 16 16" style="display:block;"><path d="M2 5.500h7M2 8.500h10M2 11.500h6M2 14h9" stroke="#6c707e" stroke-width="1" fill="none"/><circle cx="12.300" cy="4" r="3.200" fill="#3574f0"/><path d="M12.300 2.300V4.200l1.200.7" stroke="#fff" stroke-width="0.900" fill="none"/></svg></div>
<div class="t" style="left:93.0px;top:997.0px;line-height:16px;letter-spacing:0.20px;">Scratches and Consoles</div>
<div class="a" style="left:488px;top:701px;width:7px;height:340.500px;border-radius:3.500px;background:#cbcbce"></div>
<div class="a panel" style="left:502px;top:41px;width:1378px;height:1004px"></div>
<div class="a" style="left:509px;top:49px;width:131px;height:27px;box-sizing:border-box;border:1px solid #a9bcf3;border-radius:6px;background:#e2e9fc"></div>
<div class="a" style="left:515.5px;top:54.5px"><svg width="16" height="16" viewBox="0 0 16 16" style="display:block;"><path d="M1.200 7.800h10.300c.4-.9 1.300-1.600 2.400-1.400.3 0 .6.100.8.300-.2 1-.9 1.500-1.700 1.700-.7 3.400-2.900 5.600-6.200 5.600-3.300 0-5.200-2.400-5.600-6.200z" fill="#3f6ce6"/><rect x="3.100" y="4.200" width="2.700" height="2.600" fill="#3f4db0"/><rect x="7" y="4.200" width="2.900" height="2.600" fill="#3f4db0"/><rect x="7" y="0.300" width="2.900" height="2.600" fill="#3f4db0"/><rect x="3.800" y="10" width="1.900" height="1.800" fill="#eef3ff"/></svg></div>
<div class="t" style="left:536.5px;top:56.0px;line-height:16px;color:#3350a8;letter-spacing:0.15px;">compose.yml</div>
<div class="a" style="left:624.5px;top:59.3px"><svg width="8" height="8" viewBox="0 0 8 8" style="display:block;"><path d="M1 1l6 6M7 1L1 7" stroke="#b3b8c8" stroke-width="1.100" stroke-linecap="round"/></svg></div>
<div class="a" style="left:654.5px;top:54.500px;opacity:0.78"><svg width="16" height="16" viewBox="0 0 16 16" style="display:block;"><path d="M.8 8h11.600c.2-1 .9-1.800 2.100-1.800.4 0 .8.100 1.100.300-.2 1.100-1 1.800-2.100 1.900-.5 3.200-2.800 5.100-6.200 5.100-3.800 0-6-2-6.500-5.500z" fill="#4071e8"/><path d="M1.500 8.400h10.500" stroke="#6f98f5" stroke-width="0.900"/><circle cx="4.600" cy="10.400" r="0.800" fill="#fff"/><rect x="4.200" y="2" width="5" height="5.300" fill="#3558c8"/></svg></div>
<div class="t" style="left:675.4px;top:56.0px;line-height:16px;color:#5a5d6b;letter-spacing:0.39px;">development/nginx/Dockerfile</div>
<div class="a" style="left:899.5px;top:54.500px;opacity:0.78"><svg width="16" height="16" viewBox="0 0 16 16" style="display:block;"><path d="M.8 8h11.600c.2-1 .9-1.800 2.100-1.800.4 0 .8.100 1.100.300-.2 1.100-1 1.800-2.100 1.900-.5 3.200-2.800 5.100-6.200 5.100-3.800 0-6-2-6.500-5.500z" fill="#4071e8"/><path d="M1.500 8.400h10.500" stroke="#6f98f5" stroke-width="0.900"/><circle cx="4.600" cy="10.400" r="0.800" fill="#fff"/><rect x="4.200" y="2" width="5" height="5.300" fill="#3558c8"/></svg></div>
<div class="t" style="left:921.0px;top:56.0px;line-height:16px;color:#5a5d6b;letter-spacing:0.43px;">development/php-cli/Dockerfile</div>
<div class="a" style="left:1154.5px;top:54.500px;opacity:0.78"><svg width="16" height="16" viewBox="0 0 16 16" style="display:block;"><path d="M.8 8h11.600c.2-1 .9-1.800 2.100-1.800.4 0 .8.100 1.100.300-.2 1.100-1 1.800-2.100 1.900-.5 3.200-2.800 5.100-6.200 5.100-3.800 0-6-2-6.500-5.500z" fill="#4071e8"/><path d="M1.500 8.400h10.500" stroke="#6f98f5" stroke-width="0.900"/><circle cx="4.600" cy="10.400" r="0.800" fill="#fff"/><rect x="4.200" y="2" width="5" height="5.300" fill="#3558c8"/></svg></div>
<div class="t" style="left:1176.0px;top:56.0px;line-height:16px;color:#5a5d6b;letter-spacing:0.45px;">production/php-cli/Dockerfile</div>
<div class="a" style="left:1396px;top:54.500px;opacity:0.78"><svg width="16" height="16" viewBox="0 0 16 16" style="display:block;"><path d="M.8 8h11.600c.2-1 .9-1.800 2.100-1.800.4 0 .8.100 1.100.300-.2 1.100-1 1.800-2.100 1.900-.5 3.200-2.800 5.100-6.200 5.100-3.800 0-6-2-6.500-5.500z" fill="#4071e8"/><path d="M1.500 8.400h10.500" stroke="#6f98f5" stroke-width="0.900"/><circle cx="4.600" cy="10.400" r="0.800" fill="#fff"/><rect x="4.200" y="2" width="5" height="5.300" fill="#3558c8"/></svg></div>
<div class="t" style="left:1417.5px;top:56.0px;line-height:16px;color:#5a5d6b;letter-spacing:0.41px;">production/nginx/Dockerfile</div>
<div class="a" style="left:1628px;top:54.500px;opacity:1"><svg width="16" height="16" viewBox="0 0 16 16" style="display:block;"><path d="M1.500 2.500H4.700L8 6.700l3.300-4.200h3.200v11.300h-3V6.900L8 11.100 4.500 6.900v6.900h-3z" fill="#fbfbff" stroke="#7783cc" stroke-width="1" stroke-linejoin="round"/></svg></div>
<div class="t" style="left:1649.4px;top:56.0px;line-height:16px;color:#5a5d6b;letter-spacing:0.23px;">Makefile</div>
<div class="a" style="left:1738px;top:54.500px;opacity:1"><svg width="16" height="16" viewBox="0 0 16 16" style="display:block;"><path d="M2 3.5h12M2 6.5h9M2 9.5h12M2 12.5h8" stroke="#6c707e" stroke-width="1" fill="none"/></svg></div>
<div class="t" style="left:1759.8px;top:56.0px;line-height:16px;color:#5a5d6b;letter-spacing:-0.08px;">Jenkinsfile</div>
<div class="a" style="left:1796px;top:50px;width:15px;height:28px;background:linear-gradient(90deg,rgba(255,255,255,0),#fff)"></div>
<div class="a" style="left:1811px;top:50px;width:63px;height:28px;background:#fff"></div>
<div class="a" style="left:1829.5px;top:60px"><svg width="11" height="7" viewBox="0 0 11 7" style="display:block;"><path d="M1 1.200l4.300 4.300 4.300-4.300" fill="none" stroke="#6c707e" stroke-width="1.200" stroke-linecap="round" stroke-linejoin="round"/></svg></div>
<div class="a" style="left:1859px;top:56.2px"><svg width="4" height="15" viewBox="0 0 4 15" style="display:block;"><circle cx="2" cy="2" r="1.100" fill="#5f6270"/><circle cx="2" cy="7.200" r="1.100" fill="#5f6270"/><circle cx="2" cy="12.400" r="1.100" fill="#5f6270"/></svg></div>
<div class="a" style="left:502px;top:83px;width:1378px;height:1px;background:#ebecf0"></div>
<div class="a" style="left:1804.5px;top:90.5px"><svg width="12" height="14" viewBox="0 0 12 14" style="display:block;"><path d="M1.500 6.500l3 3L11 1.800" fill="none" stroke="#55a76a" stroke-width="1.500" stroke-linecap="round" stroke-linejoin="round"/><path d="M1 11.200l1.800 1.500 1.900-1.500 1.800 1.500 1.900-1.500 1.800 1.500" fill="none" stroke="#55a76a" stroke-width="1" stroke-linejoin="round"/></svg></div>
<div class="t" style="left:1820.7px;top:89.2px;line-height:16px;font-size:11.5px;color:#818594;letter-spacing:-0.60px;">18</div>
<div class="a" style="left:1842.3px;top:94px"><svg width="10" height="6" viewBox="0 0 10 6" style="display:block;"><path d="M1 5l3.700-3.700L8.400 5" fill="none" stroke="#818594" stroke-width="1.100" stroke-linecap="round" stroke-linejoin="round"/></svg></div>
<div class="a" style="left:1863.3px;top:94.5px"><svg width="10" height="6" viewBox="0 0 10 6" style="display:block;"><path d="M1 1.200l3.700 3.700 3.700-3.700" fill="none" stroke="#818594" stroke-width="1.100" stroke-linecap="round" stroke-linejoin="round"/></svg></div>
<div class="a" style="left:1783px;top:125px;width:38px;height:32px;border-radius:3px;background:#f2f3f5"></div>
<div class="a" style="left:1793.8px;top:133px"><svg width="16" height="16" viewBox="0 0 16 16" style="display:block;"><g fill="none" stroke="#6c707e" stroke-width="1.100" stroke-linecap="round" stroke-linejoin="round"><path d="M2.200 8.500C2 5 4.600 2.300 8 2.300c2 0 3.700 1 4.700 2.500M13.800 7.500c.2 3.500-2.400 6.200-5.800 6.200-2 0-3.700-1-4.700-2.500"/><path d="M12.900 2.200v2.800h-2.800M3.100 13.800V11h2.800"/></g></svg></div>
<div class="a" style="left:502px;top:633px;width:1364px;height:26px;background:#f5f8fe"></div>
<div class="a" style="left:1216px;top:165px;width:18px;height:26px;background:#eae8fa"></div>
<div class="a" style="left:1270px;top:633px;width:18px;height:26px;background:#a6d2ff"></div>
<div class="g" style="left:583px;top:163px;height:881px;background:#ebecf0"></div>
<div class="g" style="left:1666px;top:168px;height:872px;background:#ebecf0"></div>
<div class="ln" style="top:85.3px">1</div>
<div class="code" style="top:86px"><span class="k">services</span>:</div>
<div class="ln" style="top:111.3px">208</div>
<div class="code" style="top:112px">    <span class="k">wiremock</span>:</div>
<div class="ln" style="top:137.3px">221</div>
<div class="code" style="top:138px">        <span class="k">labels</span>:</div>
<div class="a" style="left:502px;top:162px;width:1378px;height:1px;background:#e9e9ed;box-shadow:0 1px 2px rgba(0,0,0,0.05)"></div>
<div class="ln" style="top:166.3px">225</div>
<div class="code" style="top:167px">            - traefik.http.services.wiremock.loadBalancer.server.port=80</div>
<div class="g" style="left:619px;top:165px;height:26px"></div>
<div class="g" style="left:655px;top:165px;height:26px"></div>
<div class="ln" style="top:192.3px">226</div>
<div class="code" style="top:193px">            - traefik.http.routers.wiremock.entryPoints=http</div>
<div class="g" style="left:619px;top:191px;height:26px"></div>
<div class="g" style="left:655px;top:191px;height:26px"></div>
<div class="ln" style="top:218.3px">227</div>
<div class="ln" style="top:244.3px">228</div>
<div class="code" style="top:245px">    <span class="k">backup-storage</span>:</div>
<div class="ln" style="top:270.3px">229</div>
<div class="code" style="top:271px">        <span class="k">image</span>: adobe/s3mock:4.11.0</div>
<div class="g" style="left:619px;top:269px;height:26px"></div>
<div class="ln" style="top:296.3px">230</div>
<div class="code" style="top:297px">        <span class="k">environment</span>:</div>
<div class="g" style="left:619px;top:295px;height:26px"></div>
<div class="ln" style="top:322.3px">231</div>
<div class="code" style="top:323px">            <span class="k">COM_ADOBE_TESTING_S3MOCK_STORE_INITIAL_BUCKETS</span>: backup</div>
<div class="g" style="left:619px;top:321px;height:26px"></div>
<div class="g" style="left:655px;top:321px;height:26px"></div>
<div class="ln" style="top:348.3px">232</div>
<div class="code" style="top:349px">            <span class="k">COM_ADOBE_TESTING_S3MOCK_STORE_ROOT</span>: data</div>
<div class="g" style="left:619px;top:347px;height:26px"></div>
<div class="g" style="left:655px;top:347px;height:26px"></div>
<div class="ln" style="top:374.3px">233</div>
<div class="code" style="top:375px">        <span class="k">volumes</span>:</div>
<div class="g" style="left:619px;top:373px;height:26px"></div>
<div class="ln" style="top:400.3px">234</div>
<div class="code" style="top:401px">            - backup-storage:/data</div>
<div class="g" style="left:619px;top:399px;height:26px"></div>
<div class="g" style="left:655px;top:399px;height:26px"></div>
<div class="ln" style="top:426.3px">235</div>
<div class="code" style="top:427px">        <span class="k">networks</span>:</div>
<div class="g" style="left:619px;top:425px;height:26px"></div>
<div class="ln" style="top:452.3px">236</div>
<div class="code" style="top:453px">            - traefik-public</div>
<div class="g" style="left:619px;top:451px;height:26px"></div>
<div class="g" style="left:655px;top:451px;height:26px"></div>
<div class="ln" style="top:478.3px">237</div>
<div class="code" style="top:479px">            - default</div>
<div class="g" style="left:619px;top:477px;height:26px"></div>
<div class="g" style="left:655px;top:477px;height:26px"></div>
<div class="ln" style="top:504.3px">238</div>
<div class="code" style="top:505px">        <span class="k">labels</span>:</div>
<div class="g" style="left:619px;top:503px;height:26px"></div>
<div class="ln" style="top:530.3px">239</div>
<div class="code" style="top:531px">            - traefik.enable=true</div>
<div class="g" style="left:619px;top:529px;height:26px"></div>
<div class="g" style="left:655px;top:529px;height:26px"></div>
<div class="ln" style="top:556.3px">240</div>
<div class="code" style="top:557px">            - traefik.docker.network=traefik-public</div>
<div class="g" style="left:619px;top:555px;height:26px"></div>
<div class="g" style="left:655px;top:555px;height:26px"></div>
<div class="ln" style="top:582.3px">241</div>
<div class="code" style="top:583px">            - traefik.http.routers.backup-storage.rule=Host(`backup-storage.localhost`)</div>
<div class="g" style="left:619px;top:581px;height:26px"></div>
<div class="g" style="left:655px;top:581px;height:26px"></div>
<div class="ln" style="top:608.3px">242</div>
<div class="code" style="top:609px">            - traefik.http.routers.backup-storage.entryPoints=http</div>
<div class="g" style="left:619px;top:607px;height:26px"></div>
<div class="g" style="left:655px;top:607px;height:26px"></div>
<div class="ln" style="top:634.3px;color:#5a5d6b">243</div>
<div class="code" style="top:635px">            - traefik.http.services.backup-storage.loadBalancer.server.port=80</div>
<div class="g" style="left:619px;top:633px;height:26px"></div>
<div class="g" style="left:655px;top:633px;height:26px"></div>
<div class="ln" style="top:660.3px">244</div>
<div class="ln" style="top:686.3px">245</div>
<div class="code" style="top:687px">    <span class="k">cucumber-node-cli</span>:</div>
<div class="ln" style="top:712.3px">246</div>
<div class="code" style="top:713px">        <span class="k">build</span>:</div>
<div class="g" style="left:619px;top:711px;height:26px"></div>
<div class="ln" style="top:738.3px">247</div>
<div class="code" style="top:739px">            <span class="k">context</span>: cucumber/docker/development/node</div>
<div class="g" style="left:619px;top:737px;height:26px"></div>
<div class="g" style="left:655px;top:737px;height:26px"></div>
<div class="ln" style="top:764.3px">248</div>
<div class="code" style="top:765px">        <span class="k">volumes</span>:</div>
<div class="g" style="left:619px;top:763px;height:26px"></div>
<div class="ln" style="top:790.3px">249</div>
<div class="code" style="top:791px">            - ./cucumber:/app</div>
<div class="g" style="left:619px;top:789px;height:26px"></div>
<div class="g" style="left:655px;top:789px;height:26px"></div>
<div class="ln" style="top:816.3px">250</div>
<div class="code" style="top:817px">        <span class="k">network_mode</span>: service:traefik</div>
<div class="g" style="left:619px;top:815px;height:26px"></div>
<div class="ln" style="top:842.3px">251</div>
<div class="ln" style="top:868.3px">252</div>
<div class="code" style="top:869px"><span class="k">secrets</span>:</div>
<div class="ln" style="top:894.3px">253</div>
<div class="code" style="top:895px">    <span class="k">api_db_password</span>:</div>
<div class="ln" style="top:920.3px">254</div>
<div class="code" style="top:921px">        <span class="k">file</span>: ./docker/development/secrets/api_db_password</div>
<div class="g" style="left:619px;top:919px;height:26px"></div>
<div class="ln" style="top:946.3px">255</div>
<div class="code" style="top:947px">    <span class="k">api_mailer_password</span>:</div>
<div class="ln" style="top:972.3px">256</div>
<div class="code" style="top:973px">        <span class="k">file</span>: ./docker/development/secrets/api_mailer_password</div>
<div class="g" style="left:619px;top:971px;height:26px"></div>
<div class="ln" style="top:998.3px">257</div>
<div class="code" style="top:999px">    <span class="k">sentry_dsn</span>:</div>
<div class="ln" style="top:1024.3px">258</div>
<div class="code" style="top:1025px">        <span class="k">file</span>: ./docker/development/secrets/sentry_dsn</div>
<div class="g" style="left:619px;top:1023px;height:26px"></div>
<div class="a" style="left:622px;top:132px;width:72px;height:2px;background:repeating-linear-gradient(90deg,#c6e0c6 0 2px,#e9f3e8 2px 4px)"></div>
<div class="a" style="left:721px;top:291px;width:108px;height:1px;background:#555"></div>
<div class="a" style="left:712px;top:473px;width:63px;height:2px;background:repeating-linear-gradient(90deg,#dddee3 0 2px,#f1f1f4 2px 4px)"></div>
<div class="a" style="left:919px;top:577px;width:63px;height:2px;background:repeating-linear-gradient(90deg,#dddee3 0 2px,#f1f1f4 2px 4px)"></div>
<div class="a" style="left:856px;top:837px;width:63px;height:2px;background:repeating-linear-gradient(90deg,#dddee3 0 2px,#f1f1f4 2px 4px)"></div>
<div class="a" style="left:1288px;top:635px;width:2px;height:22px;background:#000"></div>
<div class="a" style="left:1266px;top:644px"><svg width="7" height="14" viewBox="0 0 7 14" style="display:block;"><path d="M1 1h2.200M3.800 1H6M1 13h2.200M3.800 13H6M3.500 1.500v11" stroke="#222" stroke-width="1" fill="none"/></svg></div>
<div class="a" style="left:540.5px;top:247.4px"><svg width="16" height="16" viewBox="0 0 16 16" style="display:block;"><path d="M1.300 1.800v12.400c0 .6.600.9 1.100.6l11.300-6.200c.5-.3.500-.9 0-1.200L2.400 1.200c-.5-.3-1.100 0-1.100.6z" fill="#f0f8f1" stroke="#5b9e62" stroke-width="1.300" stroke-linejoin="round"/></svg></div>
<div class="a" style="left:540.5px;top:689.4px"><svg width="16" height="16" viewBox="0 0 16 16" style="display:block;"><path d="M1.300 1.800v12.400c0 .6.600.9 1.100.6l11.300-6.200c.5-.3.500-.9 0-1.200L2.400 1.200c-.5-.3-1.100 0-1.100.6z" fill="#f0f8f1" stroke="#5b9e62" stroke-width="1.300" stroke-linejoin="round"/></svg></div>
<div class="a" style="left:578.300px;top:270px;width:4.500px;height:23.500px;border-radius:2.200px;background:#7f9fe9"></div>
<div class="a" style="left:578.300px;top:322px;width:4.500px;height:49.500px;border-radius:2.200px;background:#7f9fe9"></div>
<div class="a" style="left:578px;top:420px;width:5px;height:10px;border-radius:2.500px;background:#6c707e"></div>
<div class="a" style="left:1866px;top:129px;width:13px;height:2px;background:#a585dc"></div>
<div class="a" style="left:1866px;top:136px;width:13px;height:2px;background:#a585dc"></div>
<div class="a" style="left:1866px;top:201px;width:13px;height:2px;background:#a585dc"></div>
<div class="a" style="left:1866px;top:319px;width:13px;height:2px;background:#a585dc"></div>
<div class="a" style="left:1866px;top:782px;width:13px;height:2px;background:#a585dc"></div>
<div class="a" style="left:1866px;top:821px;width:13px;height:2px;background:#a585dc"></div>
<div class="a" style="left:1866px;top:844px;width:13px;height:2px;background:#a585dc"></div>
<div class="a" style="left:1866px;top:489px;width:13px;height:2px;background:#5f9ea8"></div>
<div class="a" style="left:1869px;top:837px;width:9px;height:116px;border-radius:4px;background:rgba(170,173,185,0.36)"></div>
<div class="a" style="left:1862px;top:741px;width:1px;height:5px;background:#c4c7d0"></div>
<div class="a" style="left:1862px;top:757px;width:1px;height:5px;background:#c4c7d0"></div>
<div class="a" style="left:1862px;top:856px;width:1px;height:4px;background:#c4c7d0"></div>
<div class="a" style="left:1862px;top:863px;width:1px;height:8px;background:#c4c7d0"></div>
<div class="a" style="left:1862px;top:876px;width:1px;height:4px;background:#c4c7d0"></div>
<div class="a" style="left:14px;top:1057.5px"><svg width="9" height="9" viewBox="0 0 9 9" style="display:block;"><rect x="1" y="1" width="7" height="7" rx="1.700" fill="#f2f5ff" stroke="#4d72e0" stroke-width="1.100"/></svg></div>
<div class="t" style="left:26.0px;top:1054.2px;line-height:16px;color:#747885;letter-spacing:0.25px;">auction</div>
<div class="a" style="left:81px;top:1057px"><svg width="6" height="9" viewBox="0 0 6 9" style="display:block;"><path d="M1 1l3.500 3.500L1 8" fill="none" stroke="#818594" stroke-width="1.100" stroke-linecap="round" stroke-linejoin="round"/></svg></div>
<div class="a" style="left:96.5px;top:1053px"><svg width="16" height="16" viewBox="0 0 16 16" style="display:block;"><path d="M1.200 7.800h10.300c.4-.9 1.300-1.600 2.400-1.400.3 0 .6.100.8.300-.2 1-.9 1.500-1.700 1.700-.7 3.400-2.900 5.600-6.200 5.600-3.300 0-5.200-2.400-5.600-6.200z" fill="#3f6ce6"/><rect x="3.100" y="4.200" width="2.700" height="2.600" fill="#3f4db0"/><rect x="7" y="4.200" width="2.900" height="2.600" fill="#3f4db0"/><rect x="7" y="0.300" width="2.900" height="2.600" fill="#3f4db0"/><rect x="3.800" y="10" width="1.900" height="1.800" fill="#eef3ff"/></svg></div>
<div class="t" style="left:116.0px;top:1054.2px;line-height:16px;color:#747885;letter-spacing:0.20px;">compose.yml</div>
<div class="t" style="left:1267.0px;top:1055.3px;line-height:16px;color:#747885;letter-spacing:0.12px;">PHP: 8.4</div>
<div class="t" style="left:1338.3px;top:1055.3px;line-height:16px;color:#747885;letter-spacing:0.23px;">243:79 (2 chars)</div>
<div class="a" style="left:1457px;top:1056px"><svg width="16" height="16" viewBox="0 0 16 16" style="display:block;"><path d="M6.300 2.500c-1.400 0-2 .7-2 1.800v2c0 .9-.5 1.500-1.400 1.700.9.200 1.400.8 1.400 1.700v2c0 1.100.6 1.800 2 1.800M9.700 2.500c1.400 0 2 .7 2 1.800v2c0 .9.500 1.500 1.400 1.700-.9.200-1.400.8-1.400 1.700v2c0 1.100-.6 1.800-2 1.800" fill="none" stroke="#6c707e" stroke-width="1.100" stroke-linecap="round"/></svg></div>
<div class="a" style="left:1489px;top:1055px"><svg width="16" height="16" viewBox="0 0 16 16" style="display:block;"><g fill="none" stroke="#6c707e" stroke-width="1.100" stroke-linecap="round"><path d="M5.300 5.500c1-1.100 2.800-1.400 4-.6 1.600 1 2.300 3.100 2 5.200-.3 2.200-1.700 3.900-3.600 3.900s-3.400-1.700-3.600-3.900c-.2-1.100 0-2.200.4-3.100"/><path d="M4 8l-2.500-1.100M3.800 10.300H1.100M4.300 12.600L2 13.900M11.400 10.300h2.700M11.100 12.600l2.300 1.300M11.300 8l2.100-1"/><path d="M4.500 4.300L2.900 2.400"/></g><g fill="none" stroke="#6c707e" stroke-width="1.100" stroke-linecap="round"><path d="M8.500 3.300c1.800.2 3.300 1.500 3.700 3.300"/><path d="M8.900 1c3 .3 5.300 2.500 5.800 5.400"/></g></svg></div>
<div class="t" style="left:1521.0px;top:1055.3px;line-height:16px;color:#747885;letter-spacing:-0.60px;">LF</div>
<div class="t" style="left:1552.0px;top:1055.3px;line-height:16px;color:#747885;letter-spacing:0.35px;">UTF-8</div>
<div class="a" style="left:1607px;top:1055px"><svg width="16" height="16" viewBox="0 0 16 16" style="display:block;"><g fill="none" stroke="#6c707e" stroke-width="1.100" stroke-linecap="round"><path d="M10 14.500H3c-.6 0-1-.4-1-1v-11c0-.6.400-1 1-1h8.500c.6 0 1 .4 1 1V8"/><path d="M4.500 4.500h5.500M4.500 7.200h5.500M4.500 10h2.500"/><circle cx="11" cy="11.500" r="2.300"/><path d="M12.700 13.200l1.800 1.800"/></g></svg></div>
<div class="t" style="left:1628.0px;top:1055.3px;line-height:16px;color:#747885;letter-spacing:0.24px;">4 spaces</div>
<div class="t" style="left:1700.0px;top:1055.3px;line-height:16px;color:#747885;letter-spacing:0.07px;">No JSON schema</div>
<div class="a" style="left:1826px;top:1055px"><svg width="16" height="16" viewBox="0 0 16 16" style="display:block;"><g fill="none" stroke="#6c707e" stroke-width="1.100" stroke-linecap="round"><rect x="1.500" y="7" width="10" height="7" rx="1.500"/><path d="M9.500 7V4.700c0-1.500 1.100-2.700 2.600-2.700s2.600 1.200 2.600 2.700"/><path d="M6.500 9.800v1.600"/></g></svg></div>
<div class="a" style="left:1857px;top:1054px;width:45px;height:20px;box-sizing:border-box;border:1px solid #55a76a;border-radius:10px;background:#f2faf3"></div>
<div class="t" style="left:1867.5px;top:1056.0px;line-height:16px;color:#4f9a66;letter-spacing:-0.25px;">Trial</div>
</div></body></html>
